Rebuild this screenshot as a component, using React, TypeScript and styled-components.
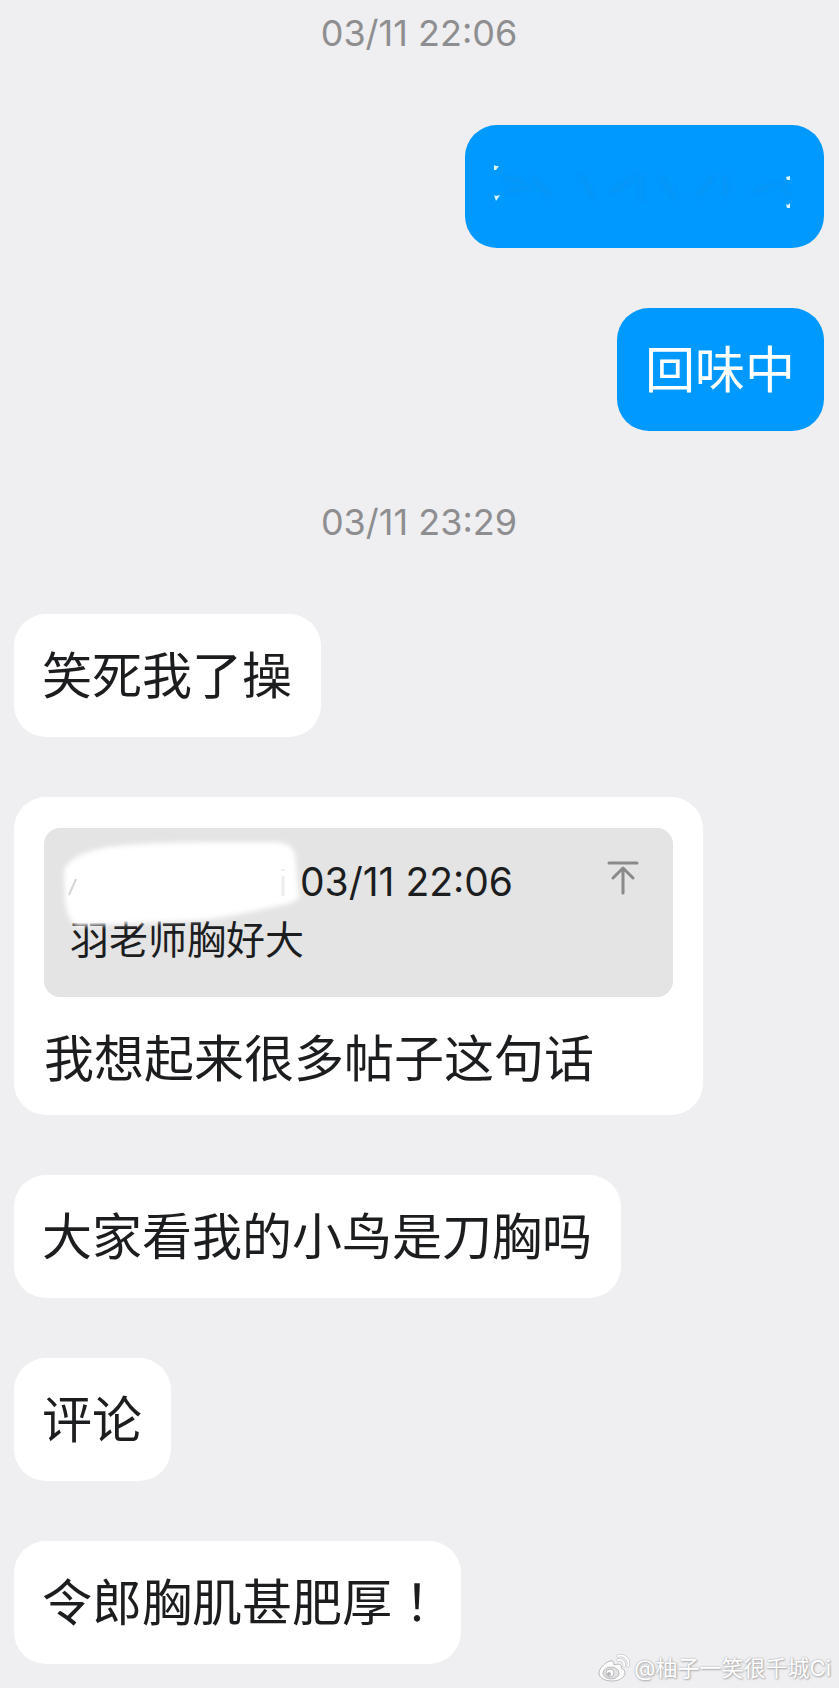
import styled, { createGlobalStyle } from "styled-components";

const App = () => {
  return (
    <>
      <GlobalStyle />
      <Chat>
        <Time>03/11 22:06</Time>
        <Bubble $mine>
          <Smear />
        </Bubble>
        <Bubble $mine>回味中</Bubble>
        <Time>03/11 23:29</Time>
        <Bubble>笑死我了操</Bubble>
        <QuoteBubble>
          <Quote>
            <QuoteHead>
              <span>03/11 22:06</span>
              <JumpButton aria-label="回到原消息">
                <JumpIcon />
              </JumpButton>
            </QuoteHead>
            <div>羽老师胸好大</div>
            <NameCover />
          </Quote>
          我想起来很多帖子这句话
        </QuoteBubble>
        <Bubble>大家看我的小鸟是刀胸吗</Bubble>
        <Bubble>评论</Bubble>
        <Bubble $endsWithMark>
          令郎胸肌甚肥厚<Mark>！</Mark>
        </Bubble>
        <Watermark>
          <WeiboLogo />
          <span>@柚子一笑很千城Ci</span>
        </Watermark>
      </Chat>
    </>
  );
};

export default App;

// what is left of the wiped message
const Smear = () => (
  <SmearSvg viewBox="0 0 302 50" aria-hidden="true">
    <defs>
      <filter id="smear" x="-5%" y="-20%" width="110%" height="140%">
        <feGaussianBlur stdDeviation="2" />
      </filter>
    </defs>
    <g fill="none" stroke="#0d8fe8" strokeWidth="5" opacity="0.4" strokeLinecap="round" filter="url(#smear)">
      <path d="M12 16l18 4M16 30l20-5M42 18l14 16M88 14l12 20M120 30l20-14M148 14v24M168 18l14 16M206 34l14-20M232 16v18M262 30l20-8M290 20l4 12" />
    </g>
    <g fill="#d9f4ff">
      <path d="M1 3l2 1 3 0-3 4-2 0z" />
      <path d="M1 33l2 1 4-1-4 6z" />
      <path d="M293 15l4-1 0 4-3 0z" />
      <path d="M293 42l2 1 2-2 0 5-3 0z" />
    </g>
  </SmearSvg>
);

const JumpIcon = () => (
  <svg width="32" height="34" viewBox="0 0 32 34" fill="none" stroke="#8a8a8b" strokeWidth="3" strokeLinecap="round" strokeLinejoin="round">
    <path d="M2 2h28M16 32V8M6 17l10-10 10 10" />
  </svg>
);

const NameCover = () => (
  <CoverSvg viewBox="0 0 250 96" aria-hidden="true">
    <defs>
      <filter id="soft" x="-10%" y="-10%" width="120%" height="120%">
        <feGaussianBlur stdDeviation="2.5" />
      </filter>
    </defs>
    <path
      d="M8 36C10 24 26 16 52 11C90 6 150 6 220 6Q236 7 239 18L243 62Q238 67 222 70C190 77 165 82 148 84L20 90Q10 82 9 64Z"
      fill="#fff"
      filter="url(#soft)"
    />
    <path d="M13 59l7-16" stroke="#c4c4c4" strokeWidth="2" opacity="0.7" />
    <path d="M227 40v20M227 33v2" stroke="#e2e2e2" strokeWidth="3" opacity="0.6" />
  </CoverSvg>
);

const WeiboLogo = () => (
  <svg width="32" height="28" viewBox="0 0 32 28" fill="none" stroke="#b9b9bb" strokeWidth="1">
    <path
      d="M12 7C6 9 1 15 1 19c0 5 6 8 13 8 8 0 13-4 13-8 0-3-2-4-4-5 1-3-1-5-7-3 0-3-1-5-4-4z"
      fill="#fff"
    />
    <ellipse cx="13" cy="19" rx="8" ry="6" fill="#e2e2e4" />
    <circle cx="12" cy="19" r="4" fill="#fff" />
    <circle cx="11" cy="20" r="1.5" fill="#b9b9bb" />
    <path d="M20 2c7-2 12 4 10 10M20 6c4-1 7 2 6 6" strokeWidth="3" strokeLinecap="round" />
    <path d="M20 2c7-2 12 4 10 10M20 6c4-1 7 2 6 6" stroke="#fff" strokeWidth="2" strokeLinecap="round" />
  </svg>
);

const GlobalStyle = createGlobalStyle`
  body {
    margin: 0;
    background-color: #efeff1;
    font-family: Inter, "Noto Sans CJK SC", sans-serif;
  }
`;

const Chat = styled.main`
  position: relative;
  display: flex;
  flex-direction: column;
  align-items: flex-start;
  gap: 60px;
  padding: 2px 15px 24px 14px;
`;

const Time = styled.time`
  align-self: center;
  line-height: 63px;
  font-size: 36px;
  color: #8e8e90;
`;

const Bubble = styled.div<{ $mine?: boolean; $endsWithMark?: boolean }>`
  box-sizing: border-box;
  min-height: 123px;
  padding: 26px ${(p) => (p.$endsWithMark ? "19px" : "29px")} 25px 28px;
  border-radius: 32px;
  font-size: 50px;
  line-height: 72px;
  align-self: ${(p) => (p.$mine ? "flex-end" : "flex-start")};
  background-color: ${(p) => (p.$mine ? "#0099ff" : "#ffffff")};
  color: ${(p) => (p.$mine ? "#ffffff" : "#1c1d1f")};
`;

const QuoteBubble = styled(Bubble)`
  width: 85%;
  padding: 31px 30px 20px;
`;

const Quote = styled.blockquote`
  position: relative;
  box-sizing: border-box;
  min-height: 169px;
  margin: 0 0 26px;
  padding: 25px 34px 25px 26px;
  border-radius: 16px;
  background-color: #e4e4e4;
  font-size: 39px;
  line-height: 58px;
`;

const QuoteHead = styled.div`
  display: flex;
  justify-content: space-between;
  padding-left: 230px;
`;

const JumpButton = styled.button`
  display: flex;
  align-items: flex-start;
  padding: 8px 0 0;
  border: none;
  background: none;
  cursor: pointer;
`;

const CoverSvg = styled.svg`
  position: absolute;
  top: 8px;
  left: 12px;
  width: 250px;
  height: 96px;
`;

const SmearSvg = styled.svg`
  display: block;
  width: 302px;
  height: 50px;
  margin-top: 11px;
`;

/* full width mark, centred in its cell */
const Mark = styled.span`
  font-family: Inter, "Noto Sans CJK TC", sans-serif;
`;

const Watermark = styled.footer`
  position: absolute;
  right: 8px;
  bottom: 4px;
  display: flex;
  align-items: center;
  gap: 4px;
  font-size: 22px;
  line-height: 32px;
  color: #ffffff;
  text-shadow: 0 0 2px #a0a0a2, 1px 1px 2px #b0b0b2;
`;
